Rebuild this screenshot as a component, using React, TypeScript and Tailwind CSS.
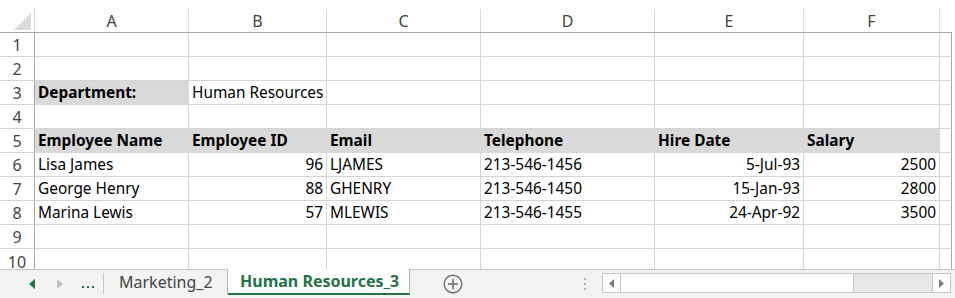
import React from "react";

const W = [35, 154, 138, 154, 174, 149, 136, 12];
const LETTERS = ["", "A", "B", "C", "D", "E", "F", ""];

type Cell = { t?: string; b?: boolean; r?: boolean; fill?: boolean };

const rows: Record<number, Cell[]> = {
  3: [{ t: "Department:", b: true, fill: true }, { t: "Human Resources" }],
  5: [
    { t: "Employee Name", b: true, fill: true },
    { t: "Employee ID", b: true, fill: true },
    { t: "Email", b: true, fill: true },
    { t: "Telephone", b: true, fill: true },
    { t: "Hire Date", b: true, fill: true },
    { t: "Salary", b: true, fill: true },
  ],
  6: [
    { t: "Lisa James" },
    { t: "96", r: true },
    { t: "LJAMES" },
    { t: "213-546-1456" },
    { t: "5-Jul-93", r: true },
    { t: "2500", r: true },
  ],
  7: [
    { t: "George Henry" },
    { t: "88", r: true },
    { t: "GHENRY" },
    { t: "213-546-1450" },
    { t: "15-Jan-93", r: true },
    { t: "2800", r: true },
  ],
  8: [
    { t: "Marina Lewis" },
    { t: "57", r: true },
    { t: "MLEWIS" },
    { t: "213-546-1455" },
    { t: "24-Apr-92", r: true },
    { t: "3500", r: true },
  ],
};

const uiFont = { fontFamily: '"Noto Sans", "Open Sans", sans-serif' };
const cellFont = { fontFamily: '"Noto Sans", "Open Sans", sans-serif' };

function HeaderRow() {
  return (
    <div className="flex h-[33px] border-b border-[#a8a8a8]">
      {W.map((w, i) => (
        <div key={i} style={{ width: w }} className="flex shrink-0 flex-col">
          <div className="h-[9px]" />
          <div
            className={
              "flex h-[23px] items-center justify-center text-[16px] text-[#444] border-r " +
              (i === W.length - 1 ? "border-transparent" : "border-[#dadada]")
            }
            style={uiFont}
          >
            {i === 0 ? (
              <div className="flex h-full w-full items-end justify-end pb-[2px] pr-[3px]">
                <svg width="17" height="17" viewBox="0 0 17 17">
                  <polygon points="17,0 17,17 0,17" fill="#dcdcdc" />
                </svg>
              </div>
            ) : (
              LETTERS[i]
            )}
          </div>
        </div>
      ))}
    </div>
  );
}

function DataRow({ n }: { n: number }) {
  const cells = rows[n] || [];
  const last = n === 10;
  return (
    <div className={"flex " + (last ? "h-[20px]" : "h-[24px]")}>
      <div
        style={{ width: W[0], ...uiFont }}
        className={
          "flex shrink-0 justify-center border-r border-[#a8a8a8] text-[16px] text-[#444] " +
          (last ? "items-start pt-[1px]" : "items-center border-b border-b-[#d4d4d4]")
        }
      >
        {n}
      </div>
      {W.slice(1).map((w, j) => {
        const c = cells[j] || {};
        const isLast = j === W.length - 2;
        let cls =
          "flex shrink-0 items-end overflow-visible whitespace-nowrap pb-[1px] text-[15.4px] leading-[20px] text-black border-r ";
        if (isLast) cls += "border-r-[#a8a8a8] ";
        else if (c.fill) cls += "border-r-[#d9d9d9] ";
        else cls += "border-r-[#d4d4d4] ";
        if (!last) cls += c.fill ? "border-b border-b-[#d9d9d9] " : "border-b border-b-[#d4d4d4] ";
        if (c.fill) cls += "bg-[#d9d9d9] ";
        cls += c.r ? "justify-end pr-[3px] " : "pl-[3px] ";
        if (c.b) cls += "font-bold ";
        return (
          <div key={j} style={{ width: w, ...cellFont }} className={cls}>
            {c.t}
          </div>
        );
      })}
    </div>
  );
}

function TabBar() {
  return (
    <div className="flex h-[29px] w-[955px] border-t border-[#c6c6c6] bg-[#f3f3f3]" style={uiFont}>
      <div className="flex w-[103px] shrink-0 items-center">
        <svg className="ml-[29px]" width="6" height="10" viewBox="0 0 6 10">
          <polygon points="6,0 6,10 0,5" fill="#217346" />
        </svg>
        <svg className="ml-[22px]" width="6" height="10" viewBox="0 0 6 10">
          <polygon points="0,0 0,10 6,5" fill="#c0c0c0" />
        </svg>
        <div className="ml-[19px] flex gap-[3px] pt-[6px]">
          <span className="h-[2px] w-[2px] bg-[#217346]" />
          <span className="h-[2px] w-[2px] bg-[#217346]" />
          <span className="h-[2px] w-[2px] bg-[#217346]" />
        </div>
      </div>
      <div className="mt-[3px] h-[21px] w-px shrink-0 bg-[#c6c6c6]" />
      <div className="flex h-[24px] w-[124px] shrink-0 items-center border-r border-[#b4b4b4] pl-[15px] text-[16px] text-[#444]">
        Marketing_2
      </div>
      <div className="-mt-px flex h-[26px] w-[182px] shrink-0 items-center border-b-2 border-r border-b-[#217346] border-r-[#b4b4b4] bg-white pl-[12px] text-[16px] font-bold text-[#217346]">
        Human Resources_3
      </div>
      <div className="flex w-[170px] shrink-0 items-center pl-[33px]">
        <svg width="20" height="20" viewBox="0 0 20 20">
          <circle cx="10" cy="10" r="8.8" fill="none" stroke="#6e6e6e" strokeWidth="1.4" />
          <line x1="10" y1="5" x2="10" y2="15" stroke="#6e6e6e" strokeWidth="1.6" />
          <line x1="5" y1="10" x2="15" y2="10" stroke="#6e6e6e" strokeWidth="1.6" />
        </svg>
      </div>
      <div className="flex w-[10px] shrink-0 flex-col items-center justify-center gap-[3px]">
        <span className="h-[2px] w-[2px] bg-[#b0b0b0]" />
        <span className="h-[2px] w-[2px] bg-[#b0b0b0]" />
        <span className="h-[2px] w-[2px] bg-[#b0b0b0]" />
      </div>
      <div className="ml-[12px] mt-[3px] flex h-[20px] w-[349px] shrink-0 border border-[#c6c6c6] bg-[#e8e8e8]">
        <div className="flex w-[18px] shrink-0 items-center justify-center border-r border-[#c6c6c6] bg-white">
          <svg width="5" height="9" viewBox="0 0 5 9">
            <polygon points="5,0 5,9 0,4.5" fill="#7a7a7a" />
          </svg>
        </div>
        <div className="w-[233px] shrink-0 border-r border-[#c6c6c6] bg-white" />
        <div className="flex-1" />
        <div className="flex w-[18px] shrink-0 items-center justify-center border-l border-[#c6c6c6] bg-white">
          <svg width="5" height="9" viewBox="0 0 5 9">
            <polygon points="0,0 0,9 5,4.5" fill="#7a7a7a" />
          </svg>
        </div>
      </div>
    </div>
  );
}

export default function App() {
  return (
    <div className="h-[298px] w-[955px] overflow-hidden bg-white">
      <div className="w-[952px]">
        <HeaderRow />
        {[1, 2, 3, 4, 5, 6, 7, 8, 9, 10].map((n) => (
          <DataRow key={n} n={n} />
        ))}
      </div>
      <TabBar />
    </div>
  );
}
